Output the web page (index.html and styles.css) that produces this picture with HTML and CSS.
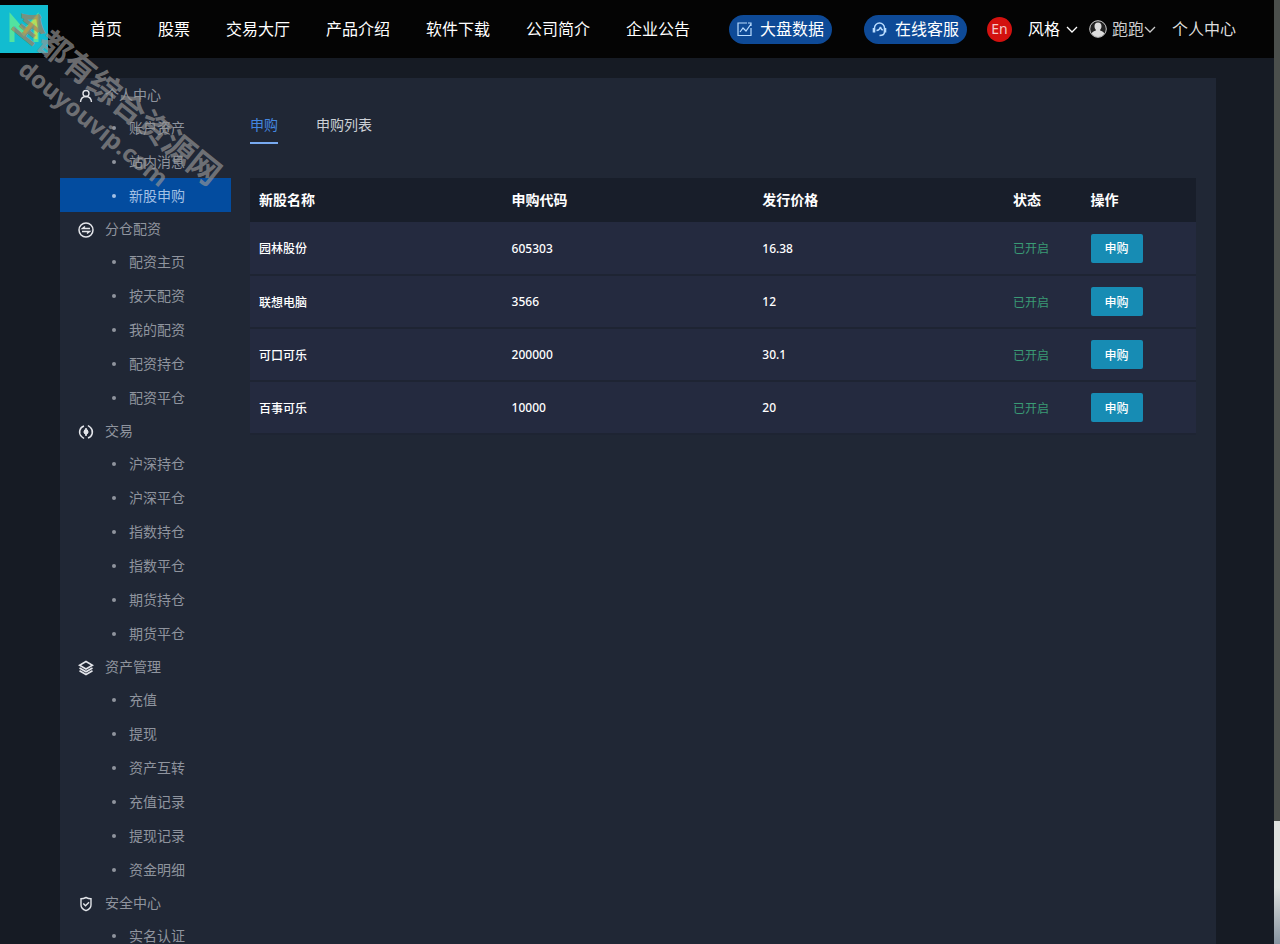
FILE: index.html
```html
<!DOCTYPE html>
<html lang="zh-CN">
<head>
<meta charset="utf-8">
<title>新股申购</title>
<link rel="stylesheet" href="styles.css">
</head>
<body>
<div class="shell">
  <div class="page">
    <header class="topbar">
      <a class="logo" href="#" aria-label="M">
        <svg width="48" height="48" viewBox="0 0 48 48"><path d="M12 37V14l12 14 12-14v23" fill="none" stroke="#52e3a0" stroke-width="5"/><path d="M24 28l12-14v20" fill="none" stroke="#b5dc5a" stroke-width="3"/></svg>
      </a>
      <nav class="nav">
        <a href="#">首页</a><a href="#">股票</a><a href="#">交易大厅</a><a href="#">产品介绍</a><a href="#">软件下载</a><a href="#">公司简介</a><a href="#">企业公告</a>
      </nav>
      <div class="tools">
        <a class="pill" href="#"><svg width="15" height="15" viewBox="0 0 15 15" fill="none" stroke="currentColor" stroke-width="1.200"><path d="M14 6v7.500H1V1h9M3 10l3-4 3 3 5-7M11 1h3v3"/></svg>大盘数据</a>
        <a class="pill pill-service" href="#"><svg width="15" height="15" viewBox="0 0 15 15" fill="none" stroke="currentColor" stroke-width="1.400"><path d="M2.500 6a5 5 0 0 1 10 0M7.500 13.500c3 0 5-1.200 5-3.500M4.500 8.500c2-.2 3.500-1.500 4-3.500.4 1.800 1.200 2.700 2.300 3.200"/><path d="M2 6v4.500M13 6v4.500" stroke-width="2.600"/></svg>在线客服</a>
        <button class="lang" type="button">En</button>
        <button class="menu" type="button">风格<svg width="12" height="7" viewBox="0 0 12 7"><path d="M1 1l5 5 5-5" fill="none" stroke="currentColor" stroke-width="1.300"/></svg></button>
        <button class="menu user" type="button"><svg width="18" height="18" viewBox="0 0 18 18"><circle cx="9" cy="9" r="8.300" fill="#222" stroke="#ccc"/><path d="M9 2.500c2.300 0 3.500 1.600 3.500 3.800S11.300 9.500 11 10c.3 1.200 3.800 1.200 4.300 3.500A7.500 7.500 0 0 1 2.700 13.500c.5-2.300 4-2.300 4.300-3.500-.3-.5-1.500-1.500-1.500-3.700S6.700 2.500 9 2.500z" fill="#ddd"/></svg>跑跑<svg class="caret" width="12" height="7" viewBox="0 0 12 7"><path d="M1 1l5 5 5-5" fill="none" stroke="currentColor" stroke-width="1.300"/></svg></button>
        <a class="center" href="#">个人中心</a>
      </div>
    </header>
    <div class="panel">
      <aside class="side">
        <h2><svg width="16" height="16" viewBox="0 0 16 16" fill="none" stroke="currentColor" stroke-width="1.400"><circle cx="8" cy="5.500" r="3"/><path d="M2.500 14c.3-3.500 2.500-5.500 5.500-5.500s5.200 2 5.500 5.500"/></svg>个人中心</h2>
        <ul><li><a href="#">账户资产</a></li><li><a href="#">站内消息</a></li><li class="on"><a href="#">新股申购</a></li></ul>
        <h2><svg width="16" height="16" viewBox="0 0 16 16" fill="none" stroke="currentColor" stroke-width="1.500"><circle cx="8" cy="8" r="7"/><path d="M12 6.500H4.500L7 4.500M4 9.500h7.500L9 11.500"/></svg>分仓配资</h2>
        <ul><li><a href="#">配资主页</a></li><li><a href="#">按天配资</a></li><li><a href="#">我的配资</a></li><li><a href="#">配资持仓</a></li><li><a href="#">配资平仓</a></li></ul>
        <h2><svg width="16" height="16" viewBox="0 0 16 16" fill="none" stroke="currentColor" stroke-width="1.500"><path d="M6 2a6.300 6.300 0 0 0-2.500 10.500L6 14.500M10 14a6.300 6.300 0 0 0 2.500-10.500L10 1.500"/><path d="M8 4.500l2.800 3.500L8 11.500 5.200 8z" fill="currentColor" stroke="none"/><path d="M8 4v8M6 6.500h4M6 9h4"/></svg>交易</h2>
        <ul><li><a href="#">沪深持仓</a></li><li><a href="#">沪深平仓</a></li><li><a href="#">指数持仓</a></li><li><a href="#">指数平仓</a></li><li><a href="#">期货持仓</a></li><li><a href="#">期货平仓</a></li></ul>
        <h2><svg width="16" height="16" viewBox="0 0 16 16" fill="none" stroke="currentColor" stroke-width="1.600"><path d="M8 1.500l6.500 3.700L8 9 1.500 5.200zM1.500 8L8 11.800 14.500 8M1.500 10.800L8 14.500l6.500-3.700"/></svg>资产管理</h2>
        <ul><li><a href="#">充值</a></li><li><a href="#">提现</a></li><li><a href="#">资产互转</a></li><li><a href="#">充值记录</a></li><li><a href="#">提现记录</a></li><li><a href="#">资金明细</a></li></ul>
        <h2><svg width="16" height="16" viewBox="0 0 16 16" fill="none" stroke="currentColor" stroke-width="1.400"><path d="M8 1.500c2 1 3 1.300 5 1.300V9c0 2.500-2 4.500-5 5.700C5 13.500 3 11.500 3 9V2.800C5 2.800 6 2.500 8 1.500zM5.300 7.500l2.200 2.200 3.500-3.500"/></svg>安全中心</h2>
        <ul><li><a href="#">实名认证</a></li></ul>
      </aside>
      <main class="main">
        <div class="tabs"><a class="on" href="#">申购</a><a href="#">申购列表</a></div>
        <table>
          <colgroup><col class="c-name"><col class="c-code"><col class="c-price"><col class="c-state"><col></colgroup>
          <thead><tr><th>新股名称</th><th>申购代码</th><th>发行价格</th><th>状态</th><th>操作</th></tr></thead>
          <tbody>
            <tr><td>园林股份</td><td>605303</td><td>16.38</td><td class="open">已开启</td><td><button type="button">申购</button></td></tr>
            <tr><td>联想电脑</td><td>3566</td><td>12</td><td class="open">已开启</td><td><button type="button">申购</button></td></tr>
            <tr><td>可口可乐</td><td>200000</td><td>30.1</td><td class="open">已开启</td><td><button type="button">申购</button></td></tr>
            <tr><td>百事可乐</td><td>10000</td><td>20</td><td class="open">已开启</td><td><button type="button">申购</button></td></tr>
          </tbody>
        </table>
      </main>
    </div>
  </div>
  <div class="scroll"></div>
  <div class="mark"><span class="mark-cn"><b>全</b>都有综合资源网</span><span class="mark-url">douyouvip.com</span></div>
</div>
</body>
</html>
```
FILE: styles.css
```css
* { box-sizing: border-box; }
body {
  margin: 0;
  background: #161b24;
  color: #fff;
  font-family: "Noto Sans", "Noto Sans CJK SC", sans-serif;
  font-size: 14px;
}
a { color: inherit; text-decoration: none; }
button { font: inherit; color: inherit; border: 0; background: none; padding: 0; }
.shell { position: relative; display: flex; height: 100vh; overflow: hidden; }
.page { flex: 1; display: flex; flex-direction: column; min-width: 0; }
.topbar {
  display: flex;
  align-items: center;
  flex: none;
  height: 58px;
  padding-right: 38px;
  background: #040404;
  font-size: 16px;
  line-height: 20px;
  white-space: nowrap;
}
.logo { display: block; width: 48px; height: 48px; background: #12bcd0; }
.nav { display: flex; gap: 36px; margin-left: 42px; }
.tools { display: flex; align-items: center; margin-left: auto; }
.pill {
  display: flex;
  align-items: center;
  gap: 8px;
  height: 29px;
  padding: 0 8px;
  border-radius: 15px;
  background: #0e4a97;
}
.pill-service { margin-left: 32px; }
.pill svg { color: #b9dcff; }
.lang { width: 25px; height: 25px; margin-left: 20px; border-radius: 50%; background: #d3110f; font-size: 14px; color: #f3c9c9; }
.menu { display: flex; align-items: center; gap: 6px; margin-left: 16px; }
.user { gap: 5px; margin-left: 11px; color: #ccc; }
.user .caret { margin-left: -5px; }
.center { margin-left: 16px; color: #ddd; }
.panel { display: flex; flex: 1 0 auto; margin: 20px 58px 0 60px; background: #202735; }
.side { flex: none; width: 171px; color: #8f949e; }
.side h2 {
  display: flex;
  align-items: center;
  gap: 11px;
  height: 32px;
  margin: 0;
  padding-left: 18px;
  font-size: 14px;
  font-weight: 400;
}
.side h2 svg { margin-top: 3px; color: #e3e5ea; }
.side ul { margin: 0; padding: 0; list-style: none; }
.side li a { display: flex; align-items: center; gap: 13px; height: 34px; padding-left: 52px; }
.side li a::before { content: ""; width: 4px; height: 4px; margin-top: 2px; border-radius: 50%; background: currentColor; }
.side .on { background: #034c9f; color: #a3c0e4; }
.main { flex: 1; min-width: 0; padding: 33px 20px 0 19px; }
.tabs { display: flex; gap: 38px; margin-bottom: 34px; color: #ccd0d6; }
.tabs a { padding-bottom: 4px; line-height: 27px; border-bottom: 2px solid transparent; }
.tabs .on { color: #4386e0; border-color: #78aaf0; }
table { width: 100%; table-layout: fixed; border-collapse: collapse; text-align: left; }
.c-name { width: 26.7%; }
.c-code, .c-price { width: 26.5%; }
.c-state { width: 8.2%; }
th { height: 44px; padding: 0 9px; background: #181e2a; font-size: 14px; line-height: 20px; font-weight: 700; }
td { height: 53px; padding: 0 9px; border-bottom: 2px solid #1e2433; background: #242a3f; font-size: 12px; font-weight: 500; }
.open { color: #3a9a75; font-weight: 400; }
td button { display: block; width: 52px; height: 29px; border-radius: 2px; background: #178cb4; font-size: 12px; font-weight: 500; }
.scroll { flex: none; width: 6px; background: linear-gradient(#4b4f4c 0 87%, #dfe2df 87% 94%, #8793a0); }
.mark {
  position: absolute;
  top: 2px;
  left: 30px;
  transform: rotate(39deg);
  transform-origin: 0 0;
  display: flex;
  flex-direction: column;
  color: rgba(150, 150, 150, .68);
  font-weight: 700;
  white-space: nowrap;
  pointer-events: none;
}
.mark-cn { font-size: 32px; line-height: 38px; }
.mark-cn b { color: rgba(180, 120, 80, .65); }
.mark-url { padding-left: 34px; font-size: 24px; line-height: 32px; }
```
